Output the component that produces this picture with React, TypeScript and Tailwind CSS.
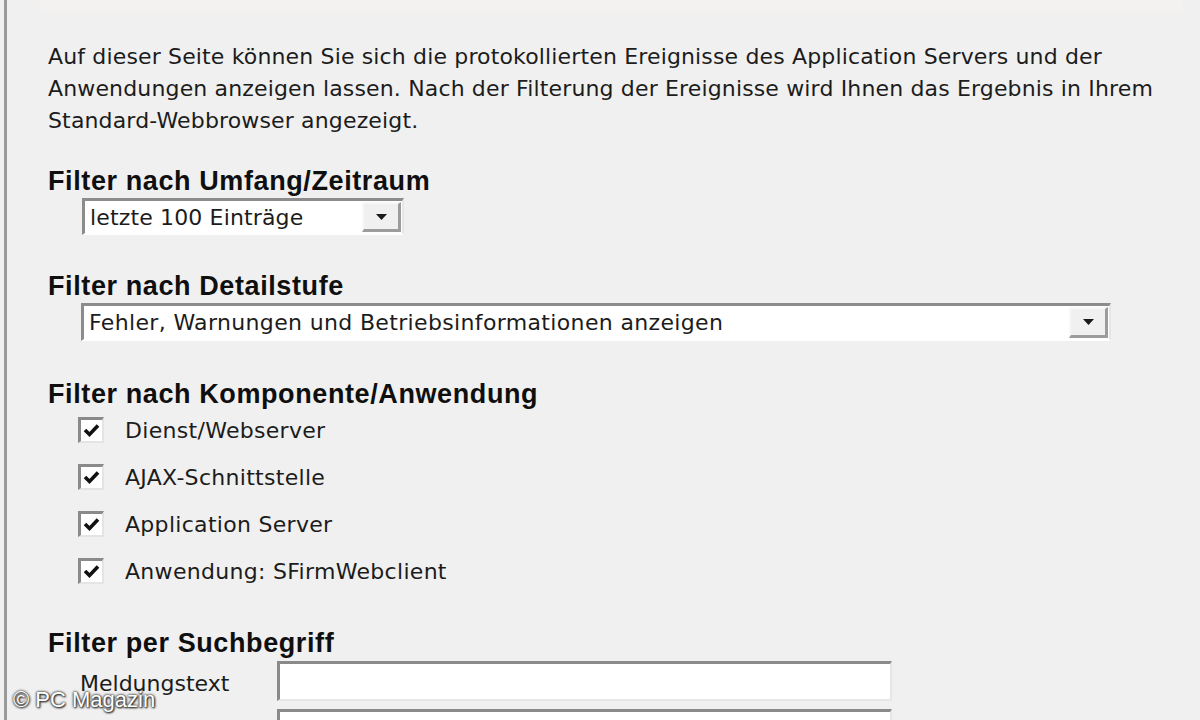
import React from "react";

const regular = { fontFamily: '"DejaVu Sans", Verdana, sans-serif' };
const bold = { fontFamily: '"Liberation Sans", Arial, sans-serif' };

function Heading({ children, className = "" }: { children: React.ReactNode; className?: string }) {
  return (
    <div
      className={`text-[27px] leading-[30px] font-bold tracking-[0.6px] text-[#0f0f0f] whitespace-nowrap ${className}`}
      style={bold}
    >
      {children}
    </div>
  );
}

function Arrow() {
  return (
    <svg width="11" height="6" viewBox="0 0 11 6">
      <polygon points="0,0 11,0 5.5,6" fill="#1a1a1a" />
    </svg>
  );
}

function Combo({ text, width, className = "", track = "tracking-[0.15px]" }: { text: string; width: string; className?: string; track?: string }) {
  return (
    <div
      className={`flex h-[37px] ${width} border-t-[3px] border-l-[3px] border-r-[2px] border-b-[2px] border-t-[#8c8c8c] border-l-[#8c8c8c] border-r-[#e6e6e6] border-b-[#ffffff] bg-white ${className}`}
    >
      <div
        className={`flex-1 flex items-center pl-[5px] text-[22px] ${track} text-[#1c1c1c] whitespace-nowrap overflow-hidden`}
        style={regular}
      >
        {text}
      </div>
      <div className="w-[39px] my-[1px] mr-[1px] flex items-center justify-center bg-[#f0f0f0] border-t-[2px] border-l-[2px] border-r-[3px] border-b-[3px] border-t-[#f8f8f8] border-l-[#f8f8f8] border-r-[#9c9c9c] border-b-[#9c9c9c]">
        <Arrow />
      </div>
    </div>
  );
}

function Check({ label }: { label: string }) {
  return (
    <div className="flex items-center h-[26px]">
      <div className="w-[26px] h-[26px] flex items-center justify-center bg-white border-t-[3px] border-l-[3px] border-r-[2px] border-b-[2px] border-t-[#8a8a8a] border-l-[#8a8a8a] border-r-[#e4e4e4] border-b-[#e4e4e4]">
        <svg width="17" height="15" viewBox="0 0 17 15">
          <polyline points="2,7 6.5,11.5 15,2.5" fill="none" stroke="#111" strokeWidth="3.6" strokeLinejoin="miter" />
        </svg>
      </div>
      <span className="ml-[21px] text-[22px] tracking-[0.3px] text-[#1c1c1c] whitespace-nowrap" style={regular}>
        {label}
      </span>
    </div>
  );
}

function TextInput({ className = "" }: { className?: string }) {
  return (
    <div
      className={`w-[615px] h-[40px] bg-white border-t-[3px] border-l-[3px] border-r-[2px] border-b-[2px] border-t-[#8a8a8a] border-l-[#8a8a8a] border-r-[#e6e6e6] border-b-[#e6e6e6] ${className}`}
    />
  );
}

export default function App() {
  return (
    <div className="relative w-[1200px] h-[720px] overflow-hidden bg-[#f0f0f0] pl-[4px]">
      <div className="h-full border-l-[3px] border-[#9a9a9a]">
        <div className="h-[12px] ml-[33px] mr-[17px] bg-[#f3f2f1]" />
        <div className="pl-[41px] pt-[29px]">
          <div className="text-[22px] leading-[32px] tracking-[0.15px] text-[#1c1c1c]" style={regular}>
            <div className="whitespace-nowrap">
              Auf dieser Seite können Sie sich die protokollierten Ereignisse des Application Servers und der
            </div>
            <div className="whitespace-nowrap">
              Anwendungen anzeigen lassen. Nach der Filterung der Ereignisse wird Ihnen das Ergebnis in Ihrem
            </div>
            <div className="whitespace-nowrap">Standard-Webbrowser angezeigt.</div>
          </div>

          <Heading className="mt-[29px]">Filter nach Umfang/Zeitraum</Heading>
          <Combo text="letzte 100 Einträge" width="w-[322px]" className="mt-[2px] ml-[34px]" />

          <Heading className="mt-[36px]">Filter nach Detailstufe</Heading>
          <Combo
            text="Fehler, Warnungen und Betriebsinformationen anzeigen"
            width="w-[1030px] h-[38px]"
            className="mt-[2px] ml-[33px]"
            track="tracking-[0.35px]"
          />

          <Heading className="mt-[38px]">Filter nach Komponente/Anwendung</Heading>
          <div className="ml-[30px] mt-[8px] flex flex-col gap-[21px]">
            <Check label="Dienst/Webserver" />
            <Check label="AJAX-Schnittstelle" />
            <Check label="Application Server" />
            <Check label="Anwendung: SFirmWebclient" />
          </div>

          <Heading className="mt-[44px]">Filter per Suchbegriff</Heading>
          <div className="mt-[3px] flex items-center">
            <div className="w-[229px] pl-[32px] text-[22px] text-[#1c1c1c] pt-[4px]" style={regular}>
              Meldungstext
            </div>
            <TextInput />
          </div>
          <div className="mt-[8px] flex">
            <div className="w-[229px]" />
            <TextInput />
          </div>
        </div>
      </div>

      <div
        className="absolute left-[13px] top-[683px] text-[22px] text-white whitespace-nowrap [text-shadow:0_0_2px_#333,0_0_3px_#333,1px_1px_2px_#222]"
        style={{ fontFamily: '"Liberation Sans", Arial, sans-serif' }}
      >
        © PC Magazin
      </div>
    </div>
  );
}
